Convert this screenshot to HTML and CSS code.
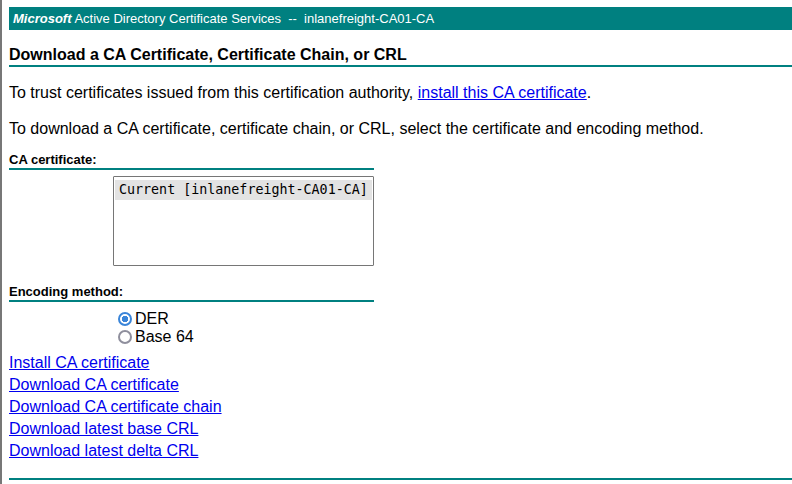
FILE: index.html
```
<!DOCTYPE html>
<html>
<head>
<meta charset="utf-8">
<title>Microsoft Active Directory Certificate Services</title>
<link rel="stylesheet" href="styles.css">
</head>
<body>
<div class="frame">
  <div class="banner"><b><i>Microsoft</i></b> Active Directory Certificate Services &nbsp;--&nbsp; inlanefreight-CA01-CA</div>
  <div class="title">Download a CA Certificate, Certificate Chain, or CRL</div>
  <p class="para first">To trust certificates issued from this certification authority, <a href="#">install this CA certificate</a>.</p>
  <p class="para">To download a CA certificate, certificate chain, or CRL, select the certificate and encoding method.</p>
  <div class="section-label">CA certificate:</div>
  <div class="listbox" role="listbox">
    <div class="option selected" role="option">Current [inlanefreight-CA01-CA]</div>
  </div>
  <div class="section-label enc">Encoding method:</div>
  <div class="radios">
    <label class="radio-row"><input type="radio" name="enc" checked>DER</label>
    <label class="radio-row"><input type="radio" name="enc">Base 64</label>
  </div>
  <div class="links">
    <a href="#">Install CA certificate</a>
    <a href="#">Download CA certificate</a>
    <a href="#">Download CA certificate chain</a>
    <a href="#">Download latest base CRL</a>
    <a href="#">Download latest delta CRL</a>
  </div>
  <div class="bottom-rule"></div>
</div>
</body>
</html>
```
FILE: styles.css
```
html, body {
  margin: 0;
  padding: 0;
  overflow: hidden;
  background: #fff;
}
body {
  font-family: "Liberation Sans", Arial, sans-serif;
  color: #000;
}
.frame {
  border-left: 2px solid #777;
  min-height: 484px;
  width: 820px;
  padding: 7px 0 0 7px;
  box-sizing: border-box;
}
.banner {
  background: #008080;
  color: #fff;
  font-size: 13px;
  height: 23px;
  line-height: 23px;
  padding-left: 4px;
  white-space: nowrap;
}
.title {
  margin-top: 15px;
  font-size: 16px;
  font-weight: bold;
  line-height: 20px;
  border-bottom: 2px solid #008080;
}
.para {
  margin: 16px 0 0 0;
  font-size: 16px;
  line-height: 20px;
}
a {
  color: #0000ee;
  text-decoration: underline;
}
.section-label {
  margin-top: 13px;
  width: 365px;
  font-size: 13px;
  font-weight: bold;
  line-height: 16px;
  border-bottom: 2px solid #008080;
}
.section-label.enc {
  margin-top: 18px;
}
.listbox {
  margin: 6px 0 0 104px;
  width: 261px;
  height: 90px;
  box-sizing: border-box;
  border: 1px solid #767676;
  border-radius: 1px;
  padding: 3px 1px;
}
.option {
  font-family: "DejaVu Sans Mono", monospace;
  font-size: 13.333px;
  line-height: 20px;
  height: 20px;
  padding-left: 4px;
  white-space: nowrap;
}
.option.selected {
  background: #e3e3e3;
}
.radios {
  margin: 8px 0 0 104px;
  display: flex;
  flex-direction: column;
}
.radio-row {
  display: flex;
  align-items: center;
  font-size: 16px;
  height: 18px;
}
.radio-row input {
  -webkit-appearance: none;
  appearance: none;
  margin: 0 3px 0 5px;
  width: 14px;
  height: 14px;
  box-sizing: border-box;
  border: 2px solid #8f8f9d;
  border-radius: 50%;
  background: #fff;
}
.radio-row input:checked {
  border-color: #3a85d9;
  background: radial-gradient(circle, #3a85d9 0 3px, #fff 3.5px);
}
.links {
  margin-top: 6px;
  display: flex;
  flex-direction: column;
  align-items: flex-start;
  font-size: 16px;
  line-height: 22px;
}
.bottom-rule {
  margin-top: 16px;
  height: 2px;
  background: #008080;
}
```
